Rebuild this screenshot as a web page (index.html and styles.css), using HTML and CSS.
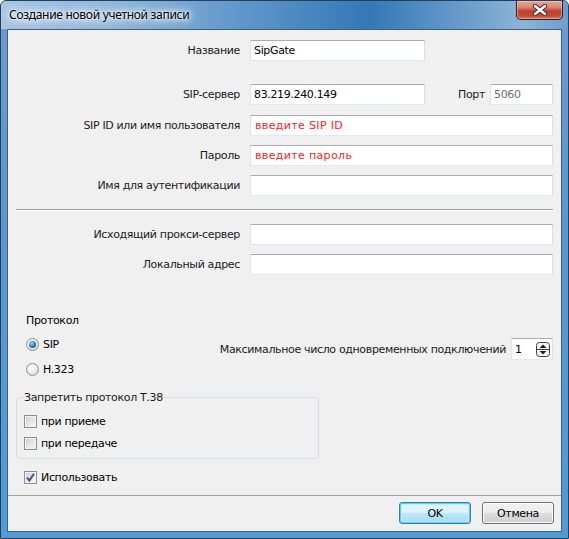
FILE: index.html
```html
<!DOCTYPE html>
<html lang="ru">
<head>
<meta charset="utf-8">
<title>Создание новой учетной записи</title>
<link rel="stylesheet" href="styles.css">
</head>
<body>
<div class="window">
  <div class="titlebar">
    <span class="title">Создание новой учетной записи</span>
    <div class="close">
      <svg width="16" height="12" viewBox="0 0 16 12">
        <path d="M3 2 L13 10 M13 2 L3 10" stroke="#4a2a2a" stroke-width="4.4" stroke-linecap="round"/>
        <path d="M3 2 L13 10 M13 2 L3 10" stroke="#ffffff" stroke-width="2.4" stroke-linecap="round"/>
      </svg>
    </div>
  </div>
  <div class="client">
    <div class="main">
      <div class="row r-name">
        <span class="lbl">Название</span>
        <div class="box w175">SipGate</div>
      </div>
      <div class="row r-server">
        <span class="lbl">SIP-сервер</span>
        <div class="box w175">83.219.240.149</div>
        <span class="port-lbl">Порт</span>
        <div class="box port">5060</div>
      </div>
      <div class="row r-gap">
        <span class="lbl">SIP ID или имя пользователя</span>
        <div class="box wide hint">введите SIP ID</div>
      </div>
      <div class="row r-gap">
        <span class="lbl">Пароль</span>
        <div class="box wide hint">введите пароль</div>
      </div>
      <div class="row r-gap">
        <span class="lbl">Имя для аутентификации</span>
        <div class="box wide"></div>
      </div>
      <div class="sep"></div>
      <div class="row r-proxy">
        <span class="lbl">Исходящий прокси-сервер</span>
        <div class="box wide"></div>
      </div>
      <div class="row r-gap">
        <span class="lbl">Локальный адрес</span>
        <div class="box wide"></div>
      </div>

      <div class="proto-area">
        <div class="proto-col">
          <div class="proto-title">Протокол</div>
          <div class="opt opt-first"><span class="radio checked"></span><span>SIP</span></div>
          <div class="opt opt-next"><span class="radio"></span><span>H.323</span></div>
        </div>
        <div class="maxconn">
          <span>Максимальное число одновременных подключений</span>
          <div class="spin">
            <span class="spin-val">1</span>
            <svg class="spin-btn" width="14" height="15" viewBox="0 0 14 15">
              <rect x="0.5" y="0.5" width="13" height="14" rx="3" fill="#f4f4f4" stroke="#3c3c3c"/>
              <line x1="1" y1="7.5" x2="13" y2="7.5" stroke="#3c3c3c"/>
              <path d="M3.5 6 L7 2.5 L10.5 6 Z" fill="#1e1e1e"/>
              <path d="M3.5 9 L7 12.5 L10.5 9 Z" fill="#1e1e1e"/>
            </svg>
          </div>
        </div>
      </div>

      <fieldset class="group">
        <legend>Запретить протокол Т.38</legend>
        <div class="opt chk-row chk-first"><span class="check"></span><span>при приеме</span></div>
        <div class="opt chk-row"><span class="check"></span><span>при передаче</span></div>
      </fieldset>

      <div class="opt use"><span class="check checked">
        <svg width="11" height="11" viewBox="0 0 11 11"><path d="M2 5.5 L4.3 8.5 L9 1.8" fill="none" stroke="#3b4f8a" stroke-width="2"/></svg>
      </span><span>Использовать</span></div>
    </div>
    <div class="footer">
      <div class="btn default">OK</div>
      <div class="btn">Отмена</div>
    </div>
  </div>
</div>
</body>
</html>
```

FILE: styles.css
```css
* { box-sizing: border-box; }

body {
  margin: 0;
  background: #ffffff;
  font-family: "DejaVu Sans", "Liberation Sans", sans-serif;
  font-size: 11px;
  letter-spacing: -0.35px;
  color: #000;
}

.window {
  width: 569px;
  height: 539px;
  display: flex;
  flex-direction: column;
  border: 1px solid #243f5c;
  border-radius: 6px 6px 0 0;
  padding: 0 6px 6px 6px;
  background: linear-gradient(to bottom, #6d9ccc 0%, #5b95cc 50%, #4f9bd8 100%);
  overflow: hidden;
}

.titlebar {
  height: 28px;
  margin: 0 -6px;
  padding: 0 6px 0 7px;
  display: flex;
  align-items: flex-start;
  background: linear-gradient(to right, #a7c5e3 0%, #8fb6db 20%, #5a93c8 45%, #3478b6 65%, #6a9dcc 82%, #8db4d8 92%, #6a9fcf 100%);
}

.title {
  font-family: "Noto Sans", "DejaVu Sans", sans-serif;
  font-size: 12px;
  letter-spacing: -0.3px;
  line-height: 16px;
  margin-top: 6px;
  color: #000;
  padding: 0 1px;
  text-shadow: 0 0 6px #fff, 0 0 10px #fff, 0 0 14px #e8f2fb, 0 0 3px #fff;
}

.close {
  margin-left: auto;
  margin-right: -1px;
  width: 47px;
  height: 19px;
  border: 1px solid #3a1a16;
  border-top: none;
  border-radius: 0 0 5px 5px;
  background: linear-gradient(to bottom, #e3a697 0%, #d88776 35%, #c2412c 55%, #c24a34 80%, #d9775f 100%);
  box-shadow: inset 0 0 0 1px rgba(255, 220, 210, 0.45);
  display: flex;
  align-items: center;
  justify-content: center;
}

.client {
  flex: 1;
  border: 1px solid #3f5f80;
  background: #f0f0f0;
  display: flex;
  flex-direction: column;
}

.main {
  height: 465px;
  padding-top: 10px;
  overflow: hidden;
}

.row {
  display: flex;
  align-items: center;
  height: 21px;
}

.r-server { margin-top: 23px; }
.r-gap { margin-top: 9px; }
.r-name + .r-server + .r-gap { margin-top: 10px; }
.r-proxy { margin-top: 13px; }

.lbl {
  width: 232px;
  margin-right: 10px;
  text-align: right;
  color: #1a1a1a;
}

.box {
  height: 21px;
  border: 1px solid;
  border-color: #abadb3 #dbdfe6 #e3e9ef #e2e3ea;
  background: #fff;
  padding: 0 3px;
  line-height: 19px;
  white-space: nowrap;
  overflow: hidden;
}

.w175 { width: 175px; }
.wide { width: 303px; }
.port { width: 63px; color: #6d6d6d; }
.hint { color: #ff1a24; padding-left: 4px; letter-spacing: 0.35px; }

.port-lbl {
  width: 65px;
  padding-right: 5px;
  text-align: right;
  color: #1a1a1a;
}

.sep {
  margin: 13px 8px 0 8px;
  height: 2px;
  border-top: 1px solid #a0a0a0;
  border-bottom: 1px solid #ffffff;
}

.proto-area {
  margin-top: 39px;
  padding-left: 18px;
  padding-right: 8px;
  display: flex;
  align-items: flex-start;
}

.proto-title { line-height: 13px; }

.opt {
  display: flex;
  align-items: center;
  line-height: 13px;
  height: 13px;
}

.opt-first { margin-top: 11px; }
.opt-next { margin-top: 12px; }

.radio {
  width: 13px;
  height: 13px;
  border-radius: 50%;
  border: 1px solid #8e8f8f;
  background: radial-gradient(circle at 40% 35%, #ffffff 0%, #ececec 45%, #cfcfcf 100%);
  margin-right: 4px;
  display: flex;
  align-items: center;
  justify-content: center;
}

.radio.checked::after {
  content: "";
  width: 7px;
  height: 7px;
  border-radius: 50%;
  background: radial-gradient(circle at 40% 35%, #a9dcff 0%, #2f86c8 45%, #0f3f6e 100%);
}

.maxconn {
  margin-left: auto;
  margin-top: 24px;
  display: flex;
  align-items: center;
  color: #1a1a1a;
}

.spin {
  margin-left: 5px;
  width: 42px;
  height: 22px;
  border: 1px solid;
  border-color: #abadb3 #dbdfe6 #e3e9ef #e2e3ea;
  background: #fff;
  display: flex;
  align-items: center;
  padding: 0 2px 0 3px;
}

.spin-val { flex: 1; color: #000; }

.group {
  margin: 15px 0 0 8px;
  width: 303px;
  padding: 0 7px 8px 7px;
  border: 1px solid #d5dfe5;
  border-radius: 3px;
  min-inline-size: 0;
}

.group legend {
  padding: 0;
  line-height: 13px;
  color: #1a1a1a;
}

.chk-row { margin-top: 9px; }
.chk-first { margin-top: 11px; }

.check {
  width: 13px;
  height: 13px;
  border: 1px solid #8e8f8f;
  background: linear-gradient(135deg, #c9cdd2 0%, #e6e7e9 55%, #f7f7f7 100%);
  box-shadow: inset 0 0 0 1px #f4f4f4;
  margin-right: 4px;
  display: flex;
  align-items: center;
  justify-content: center;
}

.use {
  margin-top: 12px;
  margin-left: 16px;
}

.footer {
  flex: 1;
  border-top: 1px solid #a0a0a0;
  display: flex;
  justify-content: flex-end;
  align-items: flex-start;
  padding: 6px 7px 0 0;
  gap: 11px;
}

.btn {
  width: 72px;
  height: 22px;
  border: 1px solid #707070;
  border-radius: 3px;
  background: linear-gradient(to bottom, #f2f2f2 0%, #ebebeb 50%, #dddddd 51%, #cfcfcf 100%);
  box-shadow: inset 0 0 0 1px #fcfcfc;
  display: flex;
  align-items: center;
  justify-content: center;
  color: #000;
}

.btn.default {
  border-color: #3c7fb1;
  box-shadow: inset 0 0 0 1px #48d2f6, inset 0 0 0 2px #c6eaf8;
  background: linear-gradient(to bottom, #eaf6fd 0%, #d9f0fc 50%, #bee6fd 51%, #a7d9f5 100%);
}
```
